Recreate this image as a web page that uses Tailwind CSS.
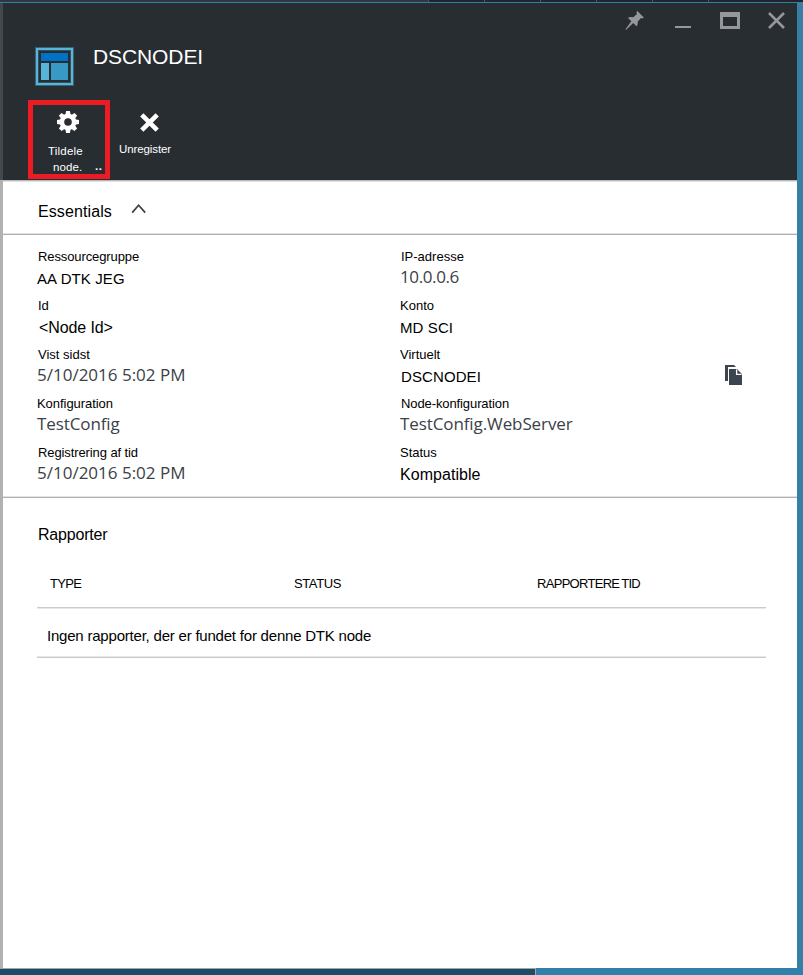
<!DOCTYPE html>
<html lang="da">
<head>
<meta charset="utf-8">
<title>DSCNODEI</title>
<script src="https://cdn.jsdelivr.net/npm/@tailwindcss/browser@4"></script>
</head>
<body class="w-[803px] h-[975px] overflow-hidden bg-[#387fa6] font-['Liberation_Sans',Arial,sans-serif] text-black">
<div class="flex h-[975px] w-[803px] flex-col">
  <div class="flex h-[2px] bg-[#1f252b]">
    <div class="w-[428px] bg-[#30383d]"></div>
    <div class="flex gap-[55px]"><i class="w-px bg-[#50555a]"></i><i class="w-px bg-[#50555a]"></i><i class="w-px bg-[#50555a]"></i><i class="w-px bg-[#50555a]"></i><i class="w-px bg-[#50555a]"></i><i class="w-px bg-[#50555a]"></i></div>
  </div>
  <div class="h-px bg-[#2e81ac]"></div>

  <div class="flex h-[965px]">
    <div class="flex w-[3px] flex-col"><div class="h-[177px] bg-[#42484c]"></div><div class="grow bg-[#b1b1b1]"></div></div>
    <main class="flex w-[794px] flex-col bg-white">
      <header class="flex h-[177px] flex-col bg-[#282d31] text-white">
        <div class="flex h-[97px] justify-between">
          <div class="flex pl-8 pt-[44px]">
            <svg class="h-[39px] w-[39px]" viewBox="0 0 39 39">
              <rect width="39" height="39" fill="#35647a"/>
              <rect x="1" y="1" width="37" height="37" fill="#59b4d9"/>
              <rect x="3" y="3" width="33" height="33" fill="#35505d"/>
              <rect x="4" y="4" width="31" height="31" fill="#282d31"/>
              <rect x="6" y="6" width="27" height="8" fill="#0072c6"/>
              <rect x="6" y="16" width="8" height="17" fill="#59b4d9"/>
              <rect x="16" y="16" width="17" height="17" fill="#3999c6"/>
            </svg>
            <h1 class="-mt-[2px] ml-[19px] text-[21px] leading-6 tracking-[-0.1px]">DSCNODEI</h1>
          </div>
          <div class="flex pt-[8px] pr-[12px]">
            <svg class="h-[20px] w-[20px]" viewBox="0 0 20 20" fill="#96979c"><path d="M12.4 0 19 6.7 17.2 7.4 16 7.1 12.8 10.6Q13 13.5 11.8 15.6L8.2 12 1.2 18.8 0.5 18.3 6.3 10.2 2.8 6.7Q5.3 5.7 8.3 6.2L12 3 11.4 1.3Z"/></svg>
            <div class="ml-[30px] mt-[15px] h-[2px] w-[16px] bg-[#96979c]"></div>
            <div class="ml-[29px] mt-[1px] h-[17px] w-[20px] border-[3px] border-t-[5px] border-[#96979c]"></div>
            <svg class="ml-[28px] mt-[1px] h-[17px] w-[17px]" viewBox="0 0 17 17" stroke="#96979c" stroke-width="2.6"><path d="M1 1 16 16M16 1 1 16"/></svg>
          </div>
        </div>
        <div class="flex pl-[25px]">
          <div class="relative h-[79px] w-[82px] border-[5px] border-[#ed1c24] pt-[6px] text-[11.5px]">
            <svg class="ml-[24px] h-[22px] w-[22px]" viewBox="-11 -11 22 22">
              <g fill="#fff"><circle r="8.2"/>
                <path id="cog" d="M-2.7-7-1.9-11H1.9L2.7-7V7L1.9 11H-1.9L-2.7 7Z"/>
                <use href="#cog" transform="rotate(45)"/><use href="#cog" transform="rotate(90)"/><use href="#cog" transform="rotate(135)"/></g>
              <circle r="3.8" fill="#282d31"/>
            </svg>
            <div class="mt-[10px] ml-[15px] leading-4 tracking-[0.2px]">Tildele</div>
            <div class="flex leading-4"><span class="ml-[20px] w-[42px] tracking-[0.1px]">node.</span><span class="-mt-px font-bold tracking-[0.5px]">..</span></div>
          </div>
          <div class="w-[70px] pl-[9px] text-[11.5px]">
            <svg class="ml-[21px] mt-[13px] h-[19px] w-[19px]" viewBox="0 0 19 19" stroke="#fff" stroke-width="4.6"><path d="M1.8 1.8 17.2 17.2M17.2 1.8 1.8 17.2"/></svg>
            <div class="mt-[9px] leading-4 tracking-[-0.1px]">Unregister</div>
          </div>
        </div>
      </header>

      <section class="flex h-[55px] border-t border-b border-t-[#b8b8b8] border-b-[#b0b0b0] pl-[35px] pt-[21px] shadow-[inset_0_1px_#e2e2e2,inset_0_-1px_#e2e2e2]">
        <h2 class="w-[93px] text-base leading-5 tracking-[0.1px]">Essentials</h2>
        <svg class="mt-px h-[11px] w-[16px]" viewBox="0 0 16 11" fill="none" stroke="#3b4148" stroke-width="1.7"><path d="M1.2 9.6 7.6 2.2 14.2 9.6"/></svg>
      </section>

      <section class="flex h-[263px] border-b border-[#b0b0b0] pt-[13px] text-[15px] leading-[22px] shadow-[inset_0_-1px_#e2e2e2]">
        <dl class="w-[363px] pl-[34px]">
          <div class="h-[49px]"><dt class="pl-px text-[13px] leading-[18px] tracking-[-0.1px]">Ressourcegruppe</dt><dd class="pt-[2px] tracking-[0.1px]">AA DTK JEG</dd></div>
          <div class="h-[49px]"><dt class="pl-px text-[13px] leading-[18px]">Id</dt><dd class="pl-[2px] pt-[2px] text-base leading-[22px] tracking-[-0.1px]">&lt;Node Id&gt;</dd></div>
          <div class="h-[49px]"><dt class="pl-px text-[13px] leading-[18px]">Vist sidst</dt><dd class="font-['Open_Sans',sans-serif] text-[17px] text-[#3b4148]">5/10/2016 5:02 PM</dd></div>
          <div class="h-[49px]"><dt class="text-[13px] leading-[18px] tracking-[-0.05px]">Konfiguration</dt><dd class="font-['Open_Sans',sans-serif] text-[17px] tracking-[-0.1px] text-[#3b4148]">TestConfig</dd></div>
          <div class="h-[49px]"><dt class="pl-px text-[13px] leading-[18px] tracking-[-0.1px]">Registrering af tid</dt><dd class="font-['Open_Sans',sans-serif] text-[17px] text-[#3b4148]">5/10/2016 5:02 PM</dd></div>
        </dl>
        <dl class="w-[358px] pl-[34px]">
          <div class="h-[49px]"><dt class="pl-px text-[13px] leading-[18px]">IP-adresse</dt><dd class="font-['Open_Sans',sans-serif] text-[17px] tracking-[-0.38px] text-[#3b4148]">10.0.0.6</dd></div>
          <div class="h-[49px]"><dt class="text-[13px] leading-[18px]">Konto</dt><dd class="pt-[2px] tracking-[0.1px]">MD SCI</dd></div>
          <div class="h-[49px]"><dt class="text-[13px] leading-[18px]">Virtuelt</dt><dd class="pl-px pt-[2px] tracking-[0.1px]">DSCNODEI</dd></div>
          <div class="h-[49px]"><dt class="pl-px text-[13px] leading-[18px] tracking-[-0.1px]">Node-konfiguration</dt><dd class="font-['Open_Sans',sans-serif] text-[17px] tracking-[-0.1px] text-[#3b4148]">TestConfig.WebServer</dd></div>
          <div class="h-[49px]"><dt class="text-[13px] leading-[18px]">Status</dt><dd class="pt-[2px] text-base leading-[22px] tracking-[0.05px]">Kompatible</dd></div>
        </dl>
        <svg class="ml-px mt-[117px] h-[20px] w-[18px]" viewBox="0 0 18 20" fill="#3b444f"><path d="M0 0H9L11 2H3V16H0ZM4 4H12L17 9V20H4Z"/><path d="M11.6 4.5V9.3H16.5" fill="none" stroke="#fff" stroke-width="1.3"/></svg>
      </section>

      <section class="px-[34px] pt-[27px]">
        <h2 class="pl-px text-base leading-5 tracking-[-0.2px]">Rapporter</h2>
        <div class="mt-[30px] flex h-[33px] w-[729px] border-b border-[#cbcbcb] pl-[13px] text-[13px] leading-[18px]">
          <div class="w-[244px] tracking-[-0.7px]">TYPE</div><div class="w-[243px] tracking-[-0.4px]">STATUS</div><div class="tracking-[-0.7px] [word-spacing:-0.8px]">RAPPORTERE TID</div>
        </div>
        <div class="h-[50px] w-[729px] border-b border-[#cbcbcb] pl-[10px] pt-[17px] text-[15px] leading-[22px] tracking-[-0.21px] shadow-[inset_0_1px_#e8e8e8,inset_0_-1px_#e8e8e8]">Ingen rapporter, der er fundet for denne DTK node</div>
      </section>
    </main>
    <div class="grow bg-[#387fa6]"></div>
  </div>
  <footer class="flex h-[7px] bg-[#2f80ab]"><div class="w-[536px] border-t border-r border-[#a5a5a5] bg-[#1b4e66]"></div></footer>
</div>
</body>
</html>
